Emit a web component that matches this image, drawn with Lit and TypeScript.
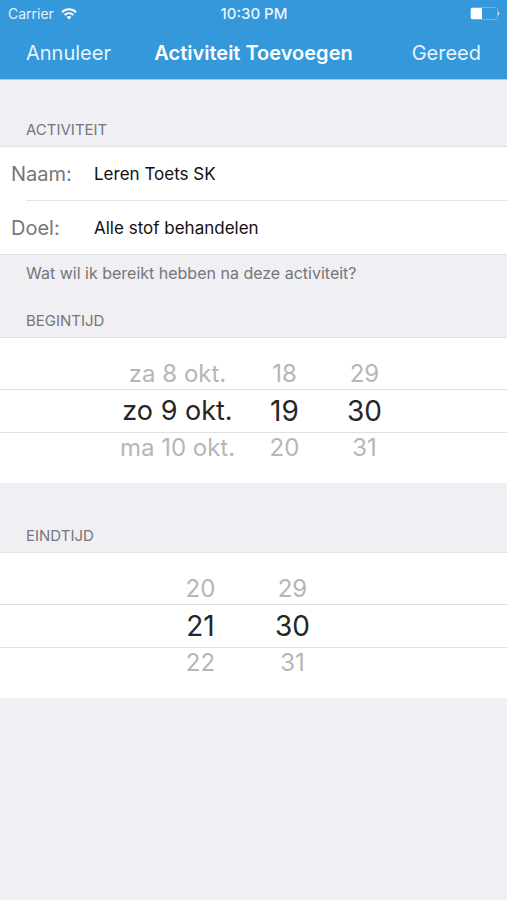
import { LitElement, html, css, nothing } from "lit";
import { customElement, property, state } from "lit/decorators.js";
import { classMap } from "lit/directives/class-map.js";

const pad = (n: number) => String(n).padStart(2, "0");
const wrap = (n: number, size: number) => (n + size) % size;

const DAYS = ["zo", "ma", "di", "wo", "do", "vr", "za"];
const MONTHS = ["jan.", "feb.", "mrt.", "apr.", "mei", "jun.", "jul.", "aug.", "sep.", "okt.", "nov.", "dec."];

function dayLabel(offset: number) {
  const d = new Date(2016, 9, 9 + offset);
  return `${DAYS[d.getDay()]} ${d.getDate()} ${MONTHS[d.getMonth()]}`;
}

@customElement("time-picker")
export class TimePicker extends LitElement {
  @property({ type: Boolean }) date = false;
  @property({ type: Number }) hour = 0;
  @property({ type: Number }) minute = 0;
  @state() private day = 0;

  static styles = css`
    :host {
      display: block;
    }
    .picker {
      display: grid;
      grid-template-rows: 51px 44px 50px;
      background: #fff;
      border-top: 1px solid #e2e2e5;
      overflow: hidden;
    }
    .band {
      grid-row: 2;
      grid-column: 1;
      border: solid #dfdfe1;
      border-width: 1px 0;
    }
    .wheels {
      grid-row: 1 / 4;
      grid-column: 1;
      display: flex;
      justify-content: center;
      padding-right: 14px;
    }
    .wheels.dated {
      padding: 0 0 0 8px;
    }
    .wheel {
      display: flex;
      flex-direction: column;
      align-items: center;
      justify-content: center;
      width: 92px;
    }
    .dated .wheel {
      width: 80px;
    }
    .dated .wheel.day {
      width: 134px;
    }
    button,
    output {
      font: 400 28px/40px Inter, "Liberation Sans", sans-serif;
      color: #262626;
      white-space: nowrap;
    }
    .day output {
      font-size: 27px;
    }
    button {
      appearance: none;
      background: none;
      border: 0;
      padding: 0;
      font-size: 24px;
      line-height: 34px;
      color: #b6b6b6;
      cursor: pointer;
    }
  `;

  private wheel(kind: string, name: string, value: number, text: (n: number) => string, set: (n: number) => void) {
    return html`
      <div class="wheel ${kind}" role="group" aria-label=${name}>
        <button type="button" @click=${() => set(value - 1)}>${text(value - 1)}</button>
        <output>${text(value)}</output>
        <button type="button" @click=${() => set(value + 1)}>${text(value + 1)}</button>
      </div>
    `;
  }

  render() {
    return html`
      <div class="picker">
        <div class="band"></div>
        <div class=${classMap({ wheels: true, dated: this.date })}>
          ${this.date ? this.wheel("day", "Dag", this.day, dayLabel, (n) => (this.day = n)) : nothing}
          ${this.wheel("hour", "Uur", this.hour, (n) => pad(wrap(n, 24)), (n) => (this.hour = wrap(n, 24)))}
          ${this.wheel("minute", "Minuut", this.minute, (n) => pad(wrap(n, 60)), (n) => (this.minute = wrap(n, 60)))}
        </div>
      </div>
    `;
  }
}

@customElement("app-root")
export class AppRoot extends LitElement {
  static styles = css`
    :host {
      display: block;
      min-height: 100vh;
      background: #efeff4;
      font-family: Inter, "Liberation Sans", sans-serif;
      color: #76767b;
    }
    header {
      background: #3498db;
      color: #fff;
      border-bottom: 1px solid #a9cbe4;
    }
    .status,
    .nav {
      display: grid;
      grid-template-columns: 1fr auto 1fr;
      align-items: center;
    }
    .status {
      height: 27px;
      padding: 0 7px 0 8px;
      font-size: 14px;
    }
    .carrier {
      display: flex;
      align-items: center;
      gap: 7px;
      color: #e3f1fb;
    }
    .clock {
      font-size: 15px;
      font-weight: 500;
      color: #e9f5fd;
    }
    .battery {
      justify-self: end;
    }
    svg {
      display: block;
    }
    .nav {
      height: 52px;
      padding: 0 26px;
    }
    .nav button {
      appearance: none;
      background: none;
      border: 0;
      padding: 0;
      font: 400 20px/28px Inter, "Liberation Sans", sans-serif;
      color: #e6f4fd;
      justify-self: start;
      cursor: pointer;
    }
    .nav button:last-child {
      justify-self: end;
    }
    h1 {
      margin: 0;
      font-size: 20px;
      line-height: 28px;
      font-weight: 600;
    }
    h2 {
      margin: 0;
      padding: 0 26px 6px;
      font-size: 15px;
      line-height: 20px;
      font-weight: 400;
      text-transform: uppercase;
    }
    section {
      padding-top: 43px;
    }
    .activity {
      padding-top: 40px;
    }
    .start {
      padding-top: 28px;
    }
    .fields {
      background: #fff;
      border: solid #e2e2e5;
      border-width: 1px 0;
    }
    .row {
      display: grid;
      grid-template-columns: 83px 1fr;
      align-items: center;
      height: 53px;
      padding-left: 11px;
    }
    .rule {
      height: 1px;
      margin-left: 26px;
      background: #e4e4e6;
    }
    label {
      font-size: 20px;
    }
    input {
      min-width: 0;
      width: 100%;
      border: 0;
      padding: 0;
      outline: 0;
      background: none;
      font: 400 17px/24px Inter, "Liberation Sans", sans-serif;
      color: #111;
    }
    .hint {
      margin: 0;
      padding: 8px 26px 0;
      font-size: 16px;
      line-height: 20px;
    }
  `;

  render() {
    return html`
      <header>
        <div class="status">
          <div class="carrier">
            <span>Carrier</span>
            <svg width="16" height="12" viewBox="0 0 16 12" fill="none" stroke="#fff" stroke-width="2" aria-hidden="true">
              <path d="M1 4.2C5 .3 11 .3 15 4.2" />
              <path d="M3.6 7C6.200 4.600 9.800 4.600 12.400 7" />
              <path d="M8 11.500 5.600 9C7 7.800 9 7.800 10.400 9Z" fill="#fff" stroke="none" />
            </svg>
          </div>
          <span class="clock">10:30 PM</span>
          <svg class="battery" width="30" height="13" viewBox="0 0 30 13" aria-hidden="true">
            <rect x=".5" y=".5" width="27" height="12" rx="2" fill="none" stroke="#6bb3e4" />
            <path d="M2 1h10v11H2a1 1 0 0 1-1-1V2a1 1 0 0 1 1-1Z" fill="#fff" />
            <path d="M28 4.500a2.200 2.200 0 0 1 0 4Z" fill="#e6f4fd" />
          </svg>
        </div>
        <nav class="nav">
          <button type="button">Annuleer</button>
          <h1>Activiteit Toevoegen</h1>
          <button type="button">Gereed</button>
        </nav>
      </header>
      <main>
        <section class="activity">
          <h2>Activiteit</h2>
          <div class="fields">
            <div class="row">
              <label for="name">Naam:</label>
              <input id="name" type="text" value="Leren Toets SK" />
            </div>
            <div class="rule"></div>
            <div class="row">
              <label for="goal">Doel:</label>
              <input id="goal" type="text" value="Alle stof behandelen" />
            </div>
          </div>
          <p class="hint">Wat wil ik bereikt hebben na deze activiteit?</p>
        </section>
        <section class="start">
          <h2>Begintijd</h2>
          <time-picker date .hour=${19} .minute=${30}></time-picker>
        </section>
        <section>
          <h2>Eindtijd</h2>
          <time-picker .hour=${21} .minute=${30}></time-picker>
        </section>
      </main>
    `;
  }
}
